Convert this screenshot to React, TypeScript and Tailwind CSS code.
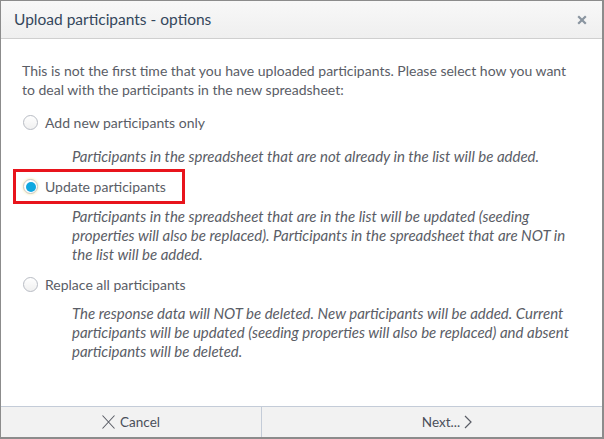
import React from "react";

function Radio({ checked }: { checked?: boolean }) {
  return checked ? (
    <span className="flex h-[15px] w-[15px] shrink-0 items-center justify-center rounded-full border border-[#c8c8c8] bg-white shadow-[0_0_3px_#f5e6a0]">
      <span className="h-[10px] w-[10px] rounded-full bg-[#10a8e0]" />
    </span>
  ) : (
    <span className="h-[15px] w-[15px] shrink-0 rounded-full border border-[#b8bcc4] bg-gradient-to-b from-white to-[#f0f0f0]" />
  );
}

export default function App() {
  return (
    <div
      className="flex h-[439px] w-[604px] flex-col border border-[#8c8c8c] border-r-2 border-b-2 bg-white text-[#5a5d66]"
      style={{ fontFamily: "Lato, 'Open Sans', sans-serif" }}
    >
      <div className="flex h-[38px] shrink-0 items-center justify-between border-b border-[#cfcfcf] bg-gradient-to-b from-[#f8f8f8] to-[#efefef] pl-[13px] pr-[15px]">
        <span className="text-[15.5px] text-[#34475c]">Upload participants - options</span>
        <svg width="10" height="10" viewBox="0 0 10 10">
          <path d="M1.2 1.2 L8.8 8.8 M8.8 1.2 L1.2 8.8" stroke="#8a95a0" strokeWidth="2.2" />
        </svg>
      </div>
      <div className="flex-1 px-[21px] pt-[22px] text-[14px] leading-[19px]">
        <p>
          This is not the first time that you have uploaded participants. Please select how you want to deal with the
          participants in the new spreadsheet:
        </p>
        <div className="mt-[10px] flex items-center gap-[7px] py-[4px] pl-[1px]">
          <Radio />
          <span>Add new participants only</span>
        </div>
        <p className="mt-[11px] pl-[50px] text-[15px] italic">
          Participants in the spreadsheet that are not already in the list will be added.
        </p>
        <div className="-ml-[9px] mt-[3px] flex h-[35px] w-[172px] items-center gap-[7px] border-[3px] border-[#e8141c] pl-[7px]">
          <Radio checked />
          <span>Update participants</span>
        </div>
        <p className="mt-[3px] pl-[50px] text-[15px] italic">
          Participants in the spreadsheet that are in the list will be updated (seeding properties will also be
          replaced). Participants in the spreadsheet that are NOT in the list will be added.
        </p>
        <div className="mt-[7px] flex items-center gap-[7px] py-[4px] pl-[1px]">
          <Radio />
          <span>Replace all participants</span>
        </div>
        <p className="mt-[6px] pl-[50px] text-[15px] italic">
          The response data will NOT be deleted. New participants will be added. Current participants will be updated
          (seeding properties will also be replaced) and absent participants will be deleted.
        </p>
      </div>
      <div className="flex h-[31px] shrink-0 border-t border-[#c4ccd8] bg-[#f2f2f2] text-[13.5px] text-[#4a4f5a]">
        <div className="flex w-[261px] items-center justify-center gap-[5px] border-r border-[#c4ccd8]">
          <svg width="13" height="14" viewBox="0 0 13 14">
            <path d="M0.5 0.5 L12.5 13.5 M12.5 0.5 L0.5 13.5" stroke="#5a5d66" strokeWidth="1.1" />
          </svg>
          <span>Cancel</span>
        </div>
        <div className="flex flex-1 items-center justify-center gap-[4px] pl-[30px]">
          <span>Next...</span>
          <svg width="8" height="14" viewBox="0 0 8 14">
            <path d="M1 1 L7 7 L1 13" fill="none" stroke="#5a5d66" strokeWidth="1.2" />
          </svg>
        </div>
      </div>
    </div>
  );
}
